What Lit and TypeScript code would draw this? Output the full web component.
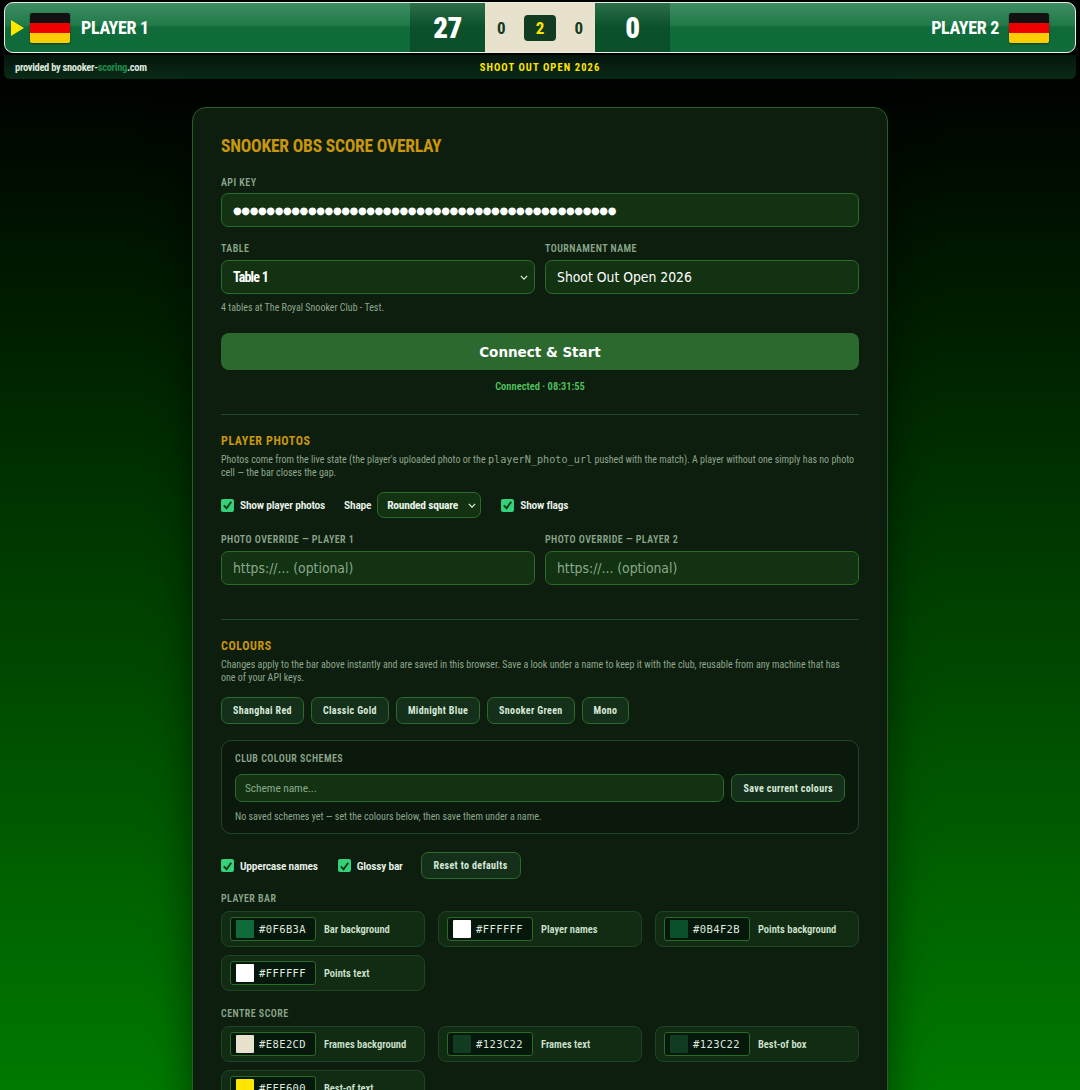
import { LitElement, html, css } from "lit";
import { customElement } from "lit/decorators.js";

const flag = html`<svg class="flag" viewBox="0 0 40 30" width="40" height="30"><rect width="40" height="10" fill="#111"/><rect y="10" width="40" height="10" fill="#e00"/><rect y="20" width="40" height="10" fill="#ffce00"/></svg>`;
const check = html`<span class="cb"><svg viewBox="0 0 14 14" width="14" height="14"><path d="M3 7.5 L6 10.5 L11 3.5" fill="none" stroke="#0d3a1c" stroke-width="2"/></svg></span>`;
const chev = html`<svg class="chev" viewBox="0 0 10 6" width="8" height="5"><path d="M1 1 L5 5 L9 1" fill="none" stroke="#e8f2e8" stroke-width="1.4"/></svg>`;

function swatch(color: string, name: string) {
  return html`<div class="sw"><div class="pick"><span class="chip" style="background:${color}"></span><span class="hex">${color}</span></div><span class="swl">${name}</span></div>`;
}

@customElement("app-root")
export class AppRoot extends LitElement {
  static styles = css`
    :host { display: block; height: 1090px; overflow: hidden; background: linear-gradient(180deg, #000 6%, #007a00 100%); font-family: "Roboto Condensed", "Liberation Sans Narrow", "Liberation Sans", sans-serif; color: #e8f2e8; }
    * { box-sizing: border-box; }
    .top { padding: 2px 4px 0; }
    .bar { height: 51px; border: 1px solid #e6efe0; border-radius: 9px; background: linear-gradient(180deg, #3f8d63 0%, #207a49 45%, #0f6b3a 50%, #0f6b3a 100%); display: grid; grid-template-columns: 1fr 75px 110px 75px 1fr; align-items: stretch; overflow: hidden; }
    .side { display: flex; align-items: center; font-weight: 700; font-size: 18px; letter-spacing: -.3px; color: #fff; padding-left: 6px; }
    .side.r { justify-content: flex-end; padding: 0 26px 0 0; gap: 10px; }
    .arrow { width: 0; height: 0; border-left: 13px solid #ffe600; border-top: 8px solid transparent; border-bottom: 8px solid transparent; margin-right: 6px; }
    .name { margin-left: 11px; }
    .flag { border-radius: 2px; box-shadow: 0 1px 2px #0006; }
    .pts { display: flex; align-items: center; justify-content: center; background: linear-gradient(180deg, #2c6f4a 0%, #0b4f2b 50%); font-weight: 900; font-size: 29px; letter-spacing: -.5px; color: #fff; }
    .mid { display: flex; align-items: center; justify-content: space-between; padding: 0 12px; background: #e8e2cd; color: #123c22; font-weight: 700; font-size: 17px; }
    .box { width: 32px; height: 26px; border-radius: 4px; background: #123c22; color: #ffe600; display: flex; align-items: center; justify-content: center; font-size: 17px; }
    .sub { height: 24px; margin-top: 2px; background: linear-gradient(180deg, #04160c, #0a2a17); border-radius: 0 0 6px 6px; display: grid; grid-template-columns: 1fr auto 1fr; align-items: center; padding: 0 11px; font-size: 10.5px; letter-spacing: -.3px; font-weight: 700; color: #dbe7db; }
    .sub b { color: #1f8a4a; font-weight: 700; }
    .tour { color: #ffe600; letter-spacing: 1.1px; font-size: 10.5px; }
    .card { width: 696px; margin: 28px auto 0; padding: 28px; height: 1100px; border: 1px solid #2a5f2a; border-radius: 14px; background: #0d1e0e; box-shadow: 0 10px 40px #0008; }
    h1 { margin: 0 0 21px; font-size: 17.5px; line-height: 20px; letter-spacing: -.2px; color: #c9960f; font-weight: 700; }
    .lbl { display: block; font-size: 10px; line-height: 12px; letter-spacing: .45px; color: #8aa58a; margin-bottom: 4px; font-weight: 600; }
    .two .lbl { margin-bottom: 5px; }
    .inp { height: 34px; border: 1px solid #2a6a2a; border-radius: 7px; background: #123212; display: flex; align-items: center; padding: 0 11px; font-family: "DejaVu Sans Condensed", "DejaVu Sans", sans-serif; font-stretch: condensed; font-size: 13.8px; color: #fff; position: relative; }
    .dots { font-size: 10px; letter-spacing: -.4px; font-family: "DejaVu Sans", sans-serif; font-stretch: normal; }
    .ph { color: #8ba88b; }
    .two { display: grid; grid-template-columns: 1fr 1fr; gap: 10px; }
    .sel { font-family: inherit; font-stretch: normal; font-weight: 700; font-size: 14px; letter-spacing: -.8px; justify-content: space-between; padding-right: 6px; }
    .chev { flex: none; }
    .mt { margin-top: 16px; }
    .hint { font-size: 10px; line-height: 13px; color: #8da68d; }
    .go { margin-top: 19px; height: 37px; border-radius: 8px; background: #2c692e; color: #fff; font-family: "DejaVu Sans", sans-serif; font-weight: 700; font-size: 13.5px; display: flex; align-items: center; justify-content: center; }
    .ok { text-align: center; margin-top: 10px; font-size: 10.5px; line-height: 14px; color: #4fc45f; font-weight: 600; }
    hr { border: 0; border-top: 1px solid #26492a; margin: 20px 0 19px; }
    h2 { margin: 0 0 5px; font-size: 12px; line-height: 14px; letter-spacing: .6px; color: #c9960f; font-weight: 700; }
    .mono { font-family: "DejaVu Sans Mono", monospace; font-size: 10.2px; }
    .row { display: flex; align-items: center; font-size: 11.5px; letter-spacing: -.25px; font-weight: 600; color: #e8f2e8; }
    .cb { width: 13px; height: 13px; border-radius: 2px; background: #34d17a; display: inline-flex; align-items: center; justify-content: center; flex: none; }
    .chk { display: flex; align-items: center; gap: 6px; white-space: nowrap; }
    .mini { height: 26px; width: 104px; display: flex; align-items: center; justify-content: space-between; padding: 0 4px 0 9px; border: 1px solid #2a6a2a; border-radius: 7px; background: #123212; font-weight: 700; white-space: nowrap; margin: 0 20px 0 6px; }
    .btns { display: flex; gap: 7px; margin-top: 13px; }
    .btn { height: 27px; display: inline-flex; align-items: center; padding: 0 11px; border: 1px solid #2a6a2a; border-radius: 7px; background: #14301a; font-size: 10px; font-weight: 700; letter-spacing: .35px; color: #d8e8d8; white-space: nowrap; }
    .club { margin-top: 16px; height: 94px; border: 1px solid #24452a; border-radius: 10px; background: #0b180c; padding: 12px 13px; }
    .club .lbl { margin-bottom: 9px; }
    .cr { display: flex; gap: 7px; }
    .cr .inp { flex: 1; height: 28px; font-family: inherit; font-stretch: normal; font-size: 11.5px; letter-spacing: -.1px; padding: 0 9px; }
    .cr .btn { height: 28px; }
    .club .hint { margin-top: 8px; }
    .grid { display: grid; grid-template-columns: repeat(3, 1fr); gap: 8px 13px; }
    .sw { height: 36px; display: flex; align-items: center; gap: 8px; padding: 0 8px; border: 1px solid #1f4424; border-radius: 8px; background: #122c14; }
    .pick { display: flex; align-items: center; gap: 5px; width: 86px; height: 24px; padding: 0 5px; border: 1px solid #2a6a2a; border-radius: 3px; background: #06170b; }
    .chip { width: 18px; height: 18px; flex: none; border-radius: 1px; }
    .hex { font-family: "DejaVu Sans Mono", monospace; font-size: 10.5px; color: #dfe9df; letter-spacing: .4px; }
    .swl { font-size: 10.5px; font-weight: 600; color: #cfe3cf; white-space: nowrap; }
    .cen { margin-top: 17px; margin-bottom: 6px; }
    .shape { margin-left: 19px; }
    .gap20 { margin-left: 20px; }
    .reset { padding: 0 12px; margin-left: 18px; }
    .rowphotos { margin-top: 13px; }
    .rowcheck { margin-top: 18px; }
    .hrb { margin-top: 34px; }
    .hinttop { margin-top: 7px; }
    .pbar { margin-top: 14px; margin-bottom: 6px; }
  `;

  render() {
    return html`
      <div class="top">
        <div class="bar">
          <div class="side"><span class="arrow"></span>${flag}<span class="name">PLAYER 1</span></div>
          <div class="pts">27</div>
          <div class="mid"><span>0</span><span class="box">2</span><span>0</span></div>
          <div class="pts">0</div>
          <div class="side r"><span>PLAYER 2</span>${flag}</div>
        </div>
        <div class="sub">
          <span>provided by snooker-<b>scoring</b>.com</span>
          <span class="tour">SHOOT OUT OPEN 2026</span>
          <span></span>
        </div>
      </div>
      <div class="card">
        <h1>SNOOKER OBS SCORE OVERLAY</h1>
        <label class="lbl">API KEY</label>
        <div class="inp"><span class="dots">●●●●●●●●●●●●●●●●●●●●●●●●●●●●●●●●●●●●●●●●●●●●●●</span></div>
        <div class="two mt">
          <div><label class="lbl">TABLE</label><div class="inp sel"><span>Table 1</span>${chev}</div></div>
          <div><label class="lbl">TOURNAMENT NAME</label><div class="inp">Shoot Out Open 2026</div></div>
        </div>
        <div class="hint hinttop">4 tables at The Royal Snooker Club - Test.</div>
        <div class="go">Connect &amp; Start</div>
        <div class="ok">Connected · 08:31:55</div>
        <hr />
        <h2>PLAYER PHOTOS</h2>
        <div class="hint">Photos come from the live state (the player's uploaded photo or the <span class="mono">playerN_photo_url</span> pushed with the match). A player without one simply has no photo cell — the bar closes the gap.</div>
        <div class="row rowphotos">
          <span class="chk">${check}Show player photos</span>
          <span class="shape">Shape</span>
          <span class="mini">Rounded square${chev}</span>
          <span class="chk">${check}Show flags</span>
        </div>
        <div class="two mt">
          <div><label class="lbl">PHOTO OVERRIDE — PLAYER 1</label><div class="inp ph">https://... (optional)</div></div>
          <div><label class="lbl">PHOTO OVERRIDE — PLAYER 2</label><div class="inp ph">https://... (optional)</div></div>
        </div>
        <hr class="hrb" />
        <h2>COLOURS</h2>
        <div class="hint">Changes apply to the bar above instantly and are saved in this browser. Save a look under a name to keep it with the club, reusable from any machine that has<br />one of your API keys.</div>
        <div class="btns">
          <span class="btn">Shanghai Red</span><span class="btn">Classic Gold</span><span class="btn">Midnight Blue</span><span class="btn">Snooker Green</span><span class="btn">Mono</span>
        </div>
        <div class="club">
          <label class="lbl">CLUB COLOUR SCHEMES</label>
          <div class="cr"><div class="inp ph">Scheme name...</div><span class="btn">Save current colours</span></div>
          <div class="hint">No saved schemes yet — set the colours below, then save them under a name.</div>
        </div>
        <div class="row rowcheck">
          <span class="chk">${check}Uppercase names</span>
          <span class="chk gap20">${check}Glossy bar</span>
          <span class="btn reset">Reset to defaults</span>
        </div>
        <label class="lbl pbar">PLAYER BAR</label>
        <div class="grid">
          ${swatch("#0F6B3A", "Bar background")}${swatch("#FFFFFF", "Player names")}${swatch("#0B4F2B", "Points background")}${swatch("#FFFFFF", "Points text")}
        </div>
        <label class="lbl cen">CENTRE SCORE</label>
        <div class="grid">
          ${swatch("#E8E2CD", "Frames background")}${swatch("#123C22", "Frames text")}${swatch("#123C22", "Best-of box")}${swatch("#FFE600", "Best-of text")}
        </div>
      </div>
    `;
  }
}
